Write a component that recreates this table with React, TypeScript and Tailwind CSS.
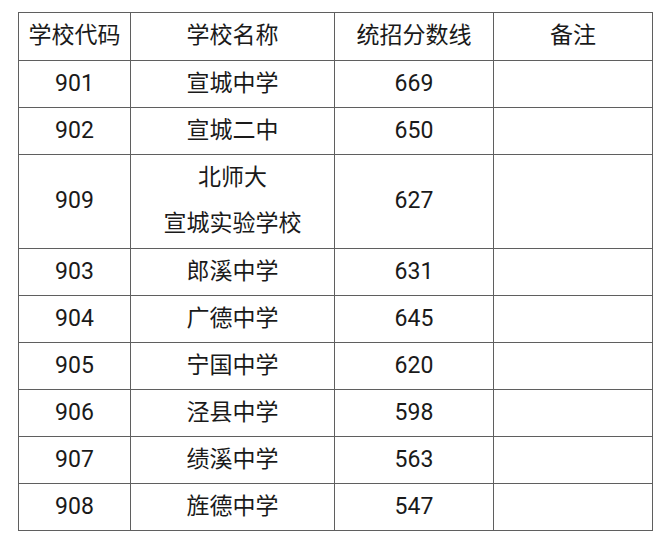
import React from "react";

const rows: { code: string; name: string[]; score: string }[] = [
  { code: "901", name: ["宣城中学"], score: "669" },
  { code: "902", name: ["宣城二中"], score: "650" },
  { code: "909", name: ["北师大", "宣城实验学校"], score: "627" },
  { code: "903", name: ["郎溪中学"], score: "631" },
  { code: "904", name: ["广德中学"], score: "645" },
  { code: "905", name: ["宁国中学"], score: "620" },
  { code: "906", name: ["泾县中学"], score: "598" },
  { code: "907", name: ["绩溪中学"], score: "563" },
  { code: "908", name: ["旌德中学"], score: "547" },
];

export default function App() {
  const cell = "border border-[#5f5f5f] text-center align-middle p-0 pb-[1px] leading-[30px]";
  return (
    <div
      className="w-[670px] h-[546px] bg-white pt-[12px] pl-[18px] text-[#1a1a1a] text-[23px]"
      style={{ fontFamily: 'Roboto, "Noto Sans CJK SC", sans-serif' }}
    >
      <table className="border-collapse table-fixed w-[634px]">
        <colgroup>
          <col className="w-[112px]" />
          <col className="w-[204px]" />
          <col className="w-[159px]" />
          <col className="w-[159px]" />
        </colgroup>
        <thead>
          <tr className="h-[48px]">
            <th className={cell + " font-normal"}>学校代码</th>
            <th className={cell + " font-normal"}>学校名称</th>
            <th className={cell + " font-normal"}>统招分数线</th>
            <th className={cell + " font-normal"}>备注</th>
          </tr>
        </thead>
        <tbody>
          {rows.map((r) => (
            <tr key={r.code} className={r.name.length > 1 ? "h-[94px]" : "h-[47px]"}>
              <td className={cell}>{r.code}</td>
              <td className={cell}>
                {r.name.map((n) => (
                  <div key={n} className={r.name.length > 1 ? "leading-[46px]" : ""}>
                    {n}
                  </div>
                ))}
              </td>
              <td className={cell}>{r.score}</td>
              <td className={cell}></td>
            </tr>
          ))}
        </tbody>
      </table>
    </div>
  );
}
